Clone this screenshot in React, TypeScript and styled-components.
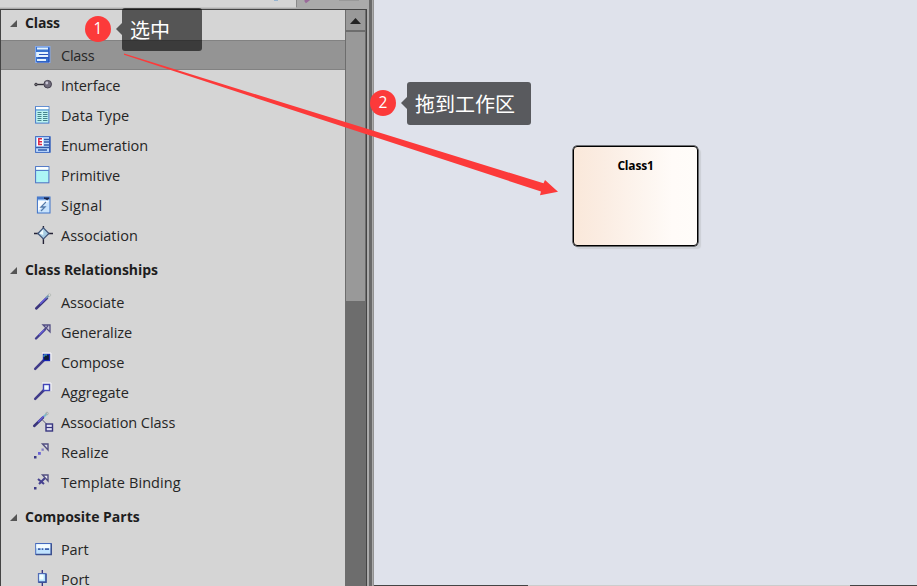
import React from "react";
import styled, { createGlobalStyle } from "styled-components";

const GlobalStyle = createGlobalStyle`
  html, body { margin: 0; padding: 0; overflow: hidden; }
  body { font-family: "Open Sans", "Noto Sans CJK SC", sans-serif; }
`;

const Screen = styled.div`
  position: relative;
  display: flex;
  width: 917px;
  height: 586px;
  overflow: hidden;
  background: #dfe2eb;
`;

const Sidebar = styled.aside`
  display: flex;
  flex-direction: column;
  flex: none;
  width: 367px;
  height: 586px;
`;

const TabStrip = styled.div`
  display: flex;
  flex: none;
  box-sizing: border-box;
  height: 9px;
  background: #aaaaaa;
`;

const ActiveTab = styled.div`
  box-sizing: border-box;
  width: 297px;
  height: 8px;
  background: #d5d5d5;
  border-right: 1px solid #8a8a8a;
  border-bottom: 1px solid #c4c4c4;
`;

const TabIcons = styled.svg`
  width: 70px;
  height: 8px;
  overflow: visible;
`;

const Toolbox = styled.div`
  display: flex;
  flex: 1;
  box-sizing: border-box;
  min-height: 0;
  border: 1px solid #444444;
  border-bottom: 0;
  background: #d5d5d5;
`;

const List = styled.div`
  flex: 1;
  min-width: 0;
  overflow: hidden;
`;

const GroupHeader = styled.div<{ $first?: boolean }>`
  display: flex;
  align-items: center;
  box-sizing: border-box;
  height: ${(p) => (p.$first ? 30 : 37)}px;
  padding: ${(p) => (p.$first ? "0 0 5px 8px" : "2px 0 0 8px")};
  color: #1e1e1e;
  font-size: 14px;
  font-weight: 700;
`;

const Caret = styled.svg`
  flex: none;
  width: 9px;
  height: 9px;
  margin: 2px 7px 0 0;
`;

const Label = styled.span<{ $spacing: number }>`
  letter-spacing: ${(p) => p.$spacing}px;
  white-space: nowrap;
`;

const Row = styled.div<{ $selected?: boolean }>`
  display: flex;
  align-items: center;
  gap: 8px;
  box-sizing: border-box;
  height: 30px;
  padding-left: 31px;
  border: solid ${(p) => (p.$selected ? "#828282" : "transparent")};
  border-width: 1px 0;
  background: ${(p) => (p.$selected ? "#949494" : "transparent")};
  color: #262626;
  font-size: 14.5px;
`;

const RowIcon = styled.svg`
  flex: none;
  width: 20px;
  height: 20px;
  margin-left: 1px;
  overflow: visible;
`;

const ScrollTrack = styled.div`
  display: flex;
  flex-direction: column;
  flex: none;
  box-sizing: border-box;
  width: 21px;
  background: #6d6d6d;
  border-left: 1px solid #6d6d6d;
`;

const ScrollUp = styled.div`
  display: flex;
  align-items: center;
  justify-content: center;
  box-sizing: border-box;
  width: 19px;
  height: 22px;
  padding-top: 2px;
  border-bottom: 2px solid #6d6d6d;
  background: #999999;
`;

const ScrollThumb = styled.div`
  width: 19px;
  height: 269px;
  background: #999999;
`;

const Splitter = styled.div`
  flex: none;
  box-sizing: border-box;
  width: 7px;
  height: 586px;
  background: linear-gradient(to right, #aaa 0 2px, #6a6a6a 2px 5px, #aaa 5px 6px, #939393 6px 7px);
`;

const Workspace = styled.main`
  display: flex;
  flex-direction: column;
  flex: 1;
  justify-content: space-between;
  box-sizing: border-box;
  padding: 146px 0 0 199px;
`;

const ClassNode = styled.div`
  box-sizing: border-box;
  width: 125px;
  height: 100px;
  padding-top: 10px;
  border: 1px solid #000;
  border-radius: 4px;
  background: linear-gradient(to right, #fae8da, #fbede3 25%, #fdf6f0 60%, #fffbf8 80%, #fffcf9);
  box-shadow: 0 0 0 0.5px #000, 3px 3px 1px #cdd0d6;
  color: #000;
  font-size: 12px;
  font-weight: 700;
  line-height: 17px;
  text-align: center;
  letter-spacing: -0.2px;
`;

const BottomEdge = styled.div`
  width: 543px;
  height: 1px;
  margin-left: -199px;
  background: linear-gradient(to right, #444 0 154px, #ccc 154px 476px, #444 476px);
`;

const Overlay = styled.svg`
  position: absolute;
  inset: 0;
  width: 917px;
  height: 586px;
  pointer-events: none;
`;

const Badge = styled.div<{ $x: number; $y: number }>`
  position: absolute;
  left: ${(p) => p.$x}px;
  top: ${(p) => p.$y}px;
  width: 26px;
  height: 26px;
  border-radius: 50%;
  background: #fc3a3a;
  color: #fff;
  font-size: 15.5px;
  line-height: 24px;
  text-align: center;
`;

const Tip = styled.div<{ $x: number; $y: number; $w: number }>`
  position: absolute;
  left: ${(p) => p.$x}px;
  top: ${(p) => p.$y}px;
  box-sizing: border-box;
  width: ${(p) => p.$w}px;
  height: 43px;
  padding-left: 8px;
  border-radius: 3px;
  background: rgba(0, 0, 0, 0.6);
  color: #fff;
  font-family: "Noto Sans CJK SC", sans-serif;
  font-size: 20px;
  font-weight: 400;
  line-height: 43px;
  white-space: nowrap;

  &::before {
    content: "";
    position: absolute;
    left: -6px;
    top: 15px;
    border: solid transparent;
    border-width: 6px 6px 6px 0;
    border-right-color: rgba(0, 0, 0, 0.6);
  }
`;

const Shaft = () => <path d="M3 16.5 12 7.5" stroke="#403c8c" strokeWidth="2.4" strokeLinecap="round" />;

const icons: Record<string, React.ReactNode> = {
  Class: (
    <>
      <rect x="2.5" y="1.5" width="14.5" height="16" fill="#3974cf" stroke="#84a7e8" />
      <path d="M4 3.5h11M4 8h11v3H4z M4 15h9" stroke="#e4f3ff" strokeWidth="1.8" fill="#d4edff" />
      <path d="M6 9.5h9M5 12.7h11M15.8 3v14M4 17h12" stroke="#2855bb" strokeWidth="1.2" />
    </>
  ),
  Interface: (
    <>
      <path d="M4 9.5h8" stroke="#302d36" strokeWidth="1.4" />
      <circle cx="3" cy="9.5" r="1.3" fill="#777" stroke="#393641" />
      <circle cx="14.7" cy="9.2" r="3.8" fill="#716d7c" stroke="#45414f" />
      <circle cx="13.8" cy="8" r="1.4" fill="#c8c5d4" />
    </>
  ),
  "Data Type": (
    <>
      <rect x="2.6" y="1.6" width="13.3" height="16.5" fill="#bbf3f1" stroke="#487aca" />
      <path d="M3 3h12.5" stroke="#fff" strokeWidth="2.2" />
      <path d="M3 5h12.5" stroke="#4b85d0" />
      <path d="M4.5 7.5h4M4.5 9.5h4M4.5 11.5h4M4.5 13.5h4M4.5 15.5h4M10 7.5h4.5M10 9.5h4.5M10 11.5h4.5M10 13.5h4.5M10 15.5h4.5" stroke="#44838d" />
    </>
  ),
  Enumeration: (
    <>
      <rect x="2.6" y="1.6" width="14.5" height="15.8" fill="#bfdcff" stroke="#3e6bc3" />
      <rect x="4" y="3" width="6" height="8" fill="#fff" />
      <path d="M9 3.8H5.8v5.7H9M6 6.7h3" fill="none" stroke="#dc2746" strokeWidth="1.5" />
      <path d="M11 4.5h5M11 7h5M11 10h5M3 12.5h14M5 15h9" stroke="#315bac" strokeWidth="1.3" />
      <path d="M16.7 2v15" stroke="#355ab2" strokeWidth="1.3" />
    </>
  ),
  Primitive: (
    <>
      <rect x="2.6" y="1.6" width="13.3" height="16.2" fill="#adf5f5" stroke="#4b71c4" />
      <path d="M3.2 3.4h12.2" stroke="#fff" strokeWidth="2.7" />
      <path d="M3 5.4h12.7" stroke="#4b71c4" />
    </>
  ),
  Signal: (
    <>
      <rect x="4.4" y="2" width="12.6" height="16" fill="#c8e3fd" stroke="#3f72c7" />
      <path d="M5 6 16 6 5 16z" fill="#f7fbff" />
      <path d="M4 3.3h13" stroke="#477acc" strokeWidth="2.5" />
      <path d="M11 3h5l-1.5 1.8z" fill="#182143" stroke="#182143" />
      <path d="m13 7-5 5h4l-4 4" fill="none" stroke="#547bab" strokeWidth="1.3" />
    </>
  ),
  Association: (
    <>
      <path d="M1 8.5h19M10.4 1v18" stroke="#242235" strokeWidth="1.4" />
      <path d="M10.4 2.8 15.9 8.5 10.4 14 4.8 8.5z" fill="#a6cce4" stroke="#405479" strokeWidth="1.2" />
      <path d="m10.2 4.5-3.9 4 4 1.5z" fill="#f2fdff" />
    </>
  ),
  Associate: (
    <>
      <path d="M3.2 16.5 14 6" stroke="#3b357d" strokeWidth="2.5" strokeLinecap="round" />
      <path d="m7 12 6-6" stroke="#665edb" strokeWidth="1.6" />
      <path d="m13 6 3.5-3.2" stroke="#7094b4" strokeWidth="2" />
      <circle cx="16.5" cy="3" r="1.3" fill="#d6dfda" stroke="#a0a4a1" strokeWidth=".5" />
    </>
  ),
  Generalize: (
    <>
      <Shaft />
      <path d="m6 13 6-6" stroke="#655ddb" strokeWidth="1.3" />
      <path d="M10 3h7v7zM11 8l4-4" fill="#c9c5d9" stroke="#514d83" strokeWidth="1.3" />
    </>
  ),
  Compose: (
    <>
      <path d="M2.2 16.8 11 8" stroke="#403b89" strokeWidth="2.5" strokeLinecap="round" />
      <path d="M9 1h9v8" fill="none" stroke="#f8f8ff" />
      <rect x="10.5" y="2.5" width="6" height="6" fill="#0e1e34" stroke="#1725b5" strokeWidth="1.3" />
      <path d="M11 5V3h3" stroke="#4bb4c4" fill="none" />
    </>
  ),
  Aggregate: (
    <>
      <path d="M2.2 16.8 11 8" stroke="#403b89" strokeWidth="2.5" strokeLinecap="round" />
      <path d="M9 1h9v8" fill="none" stroke="#f8f8ff" />
      <rect x="10.5" y="2.5" width="6" height="6" fill="#f0fbff" stroke="#4144b8" strokeWidth="1.4" />
    </>
  ),
  "Association Class": (
    <>
      <path d="M1.2 14 10 5.5" stroke="#39357c" strokeWidth="2.5" strokeLinecap="round" />
      <path d="m5 10 6-6" stroke="#665edb" strokeWidth="1.4" />
      <path d="m11 4.5 3-3" stroke="#78bac8" strokeWidth="2" />
      <circle cx="14" cy="1.5" r="1.3" fill="none" stroke="#adafaf" />
      <path d="m9.5 8 4 4" stroke="#5a577e" />
      <rect x="13" y="12" width="6.5" height="7" fill="#e1e0f4" stroke="#37357f" strokeWidth="1.4" />
      <path d="M13 15.5h6.5" stroke="#37357f" strokeWidth="1.2" />
    </>
  ),
  Realize: (
    <>
      <rect x="1" y="14" width="2.5" height="2.5" fill="#3b3884" />
      <rect x="5" y="10" width="2.8" height="2.8" fill="#6760d5" />
      <rect x="8.5" y="6.5" width="2.3" height="2.3" fill="#837ec4" />
      <path d="M9.5 2h5.5v6z" fill="#d8d8e8" stroke="#524f80" strokeWidth="1.4" />
    </>
  ),
  "Template Binding": (
    <>
      <rect x="1" y="15" width="2.5" height="2.5" fill="#3b3884" />
      <path d="m5 7 6 5M6 12l6-6" stroke="#45408f" strokeWidth="2.1" />
      <path d="M9.5 3H15v6z" fill="#e8e8f0" stroke="#524f80" strokeWidth="1.4" />
    </>
  ),
  Part: (
    <>
      <rect x="2.7" y="4.5" width="15.5" height="11" fill="#c0e3ff" stroke="#4669bd" />
      <path d="M3.3 5.3h14v4h-14z" fill="#f5fcff" />
      <path d="M3 15.5h15.3v-11" fill="none" stroke="#3c508f" strokeWidth="1.4" />
      <path d="M5 10.2h2.5M8.7 10.2h1.6M12 10.2h4" stroke="#3f62ad" strokeWidth="1.7" />
    </>
  ),
  Port: (
    <>
      <path d="M9.3 1v18" stroke="#303081" strokeWidth="1.3" />
      <rect x="5.5" y="4.6" width="7.5" height="8.5" fill="#b7e7ff" stroke="#526bb6" strokeWidth="1.2" />
      <path d="M6.5 5.5h4v5h-4z" fill="#f4ffff" />
      <path d="M5.5 13.2H13V5" fill="none" stroke="#38519a" strokeWidth="1.4" />
    </>
  ),
};

type Group = { title: string; spacing: number; items: [string, number][] };

const groups: Group[] = [
  { title: "Class", spacing: -0.15, items: [["Class", -0.25], ["Interface", -0.1], ["Data Type", 0.05], ["Enumeration", -0.08], ["Primitive", -0.05], ["Signal", 0.2], ["Association", 0]] },
  { title: "Class Relationships", spacing: -0.05, items: [["Associate", -0.05], ["Generalize", -0.1], ["Compose", -0.1], ["Aggregate", -0.05], ["Association Class", -0.06], ["Realize", 0.05], ["Template Binding", 0.08]] },
  { title: "Composite Parts", spacing: 0, items: [["Part", -0.1], ["Port", 0]] },
];

export default function App() {
  return (
    <>
      <GlobalStyle />
      <Screen>
        <Sidebar>
          <TabStrip>
            <ActiveTab />
            <TabIcons viewBox="0 0 70 8" fill="none">
              <path d="M-23 0h4" stroke="#7ba6cf" strokeWidth="1.4" />
              <path d="m8 2 4-3" stroke="#9a6a9a" strokeWidth="3" />
              <path d="M42 0h20" stroke="#999" strokeWidth="2" />
            </TabIcons>
          </TabStrip>
          <Toolbox>
            <List>
              {groups.map((group, i) => (
                <React.Fragment key={group.title}>
                  <GroupHeader $first={i === 0}>
                    <Caret viewBox="0 0 9 9">
                      <path d="M8 1v7H1z" fill="#555" />
                    </Caret>
                    <Label $spacing={group.spacing}>{group.title}</Label>
                  </GroupHeader>
                  {group.items.map(([name, spacing]) => (
                    <Row key={name} $selected={name === "Class"}>
                      <RowIcon viewBox="0 0 20 20" fill="none">{icons[name]}</RowIcon>
                      <Label $spacing={spacing}>{name}</Label>
                    </Row>
                  ))}
                </React.Fragment>
              ))}
            </List>
            <ScrollTrack>
              <ScrollUp>
                <svg width="11" height="6" viewBox="0 0 11 6">
                  <path d="M0 6 5.5 0 11 6z" fill="#222" />
                </svg>
              </ScrollUp>
              <ScrollThumb />
            </ScrollTrack>
          </Toolbox>
        </Sidebar>
        <Splitter />
        <Workspace>
          <ClassNode>Class1</ClassNode>
          <BottomEdge />
        </Workspace>
        <Overlay viewBox="0 0 917 586">
          <path d="M124 53.6 543.5 183.3 545 180 558 191.7 540 195.2 541 191.5 124 54.8z" fill="#fc3a3a" />
        </Overlay>
        <Badge $x={85} $y={16}>1</Badge>
        <Tip $x={122} $y={8} $w={80}>选中</Tip>
        <Badge $x={370} $y={90}>2</Badge>
        <Tip $x={407} $y={82} $w={124}>拖到工作区</Tip>
      </Screen>
    </>
  );
}
